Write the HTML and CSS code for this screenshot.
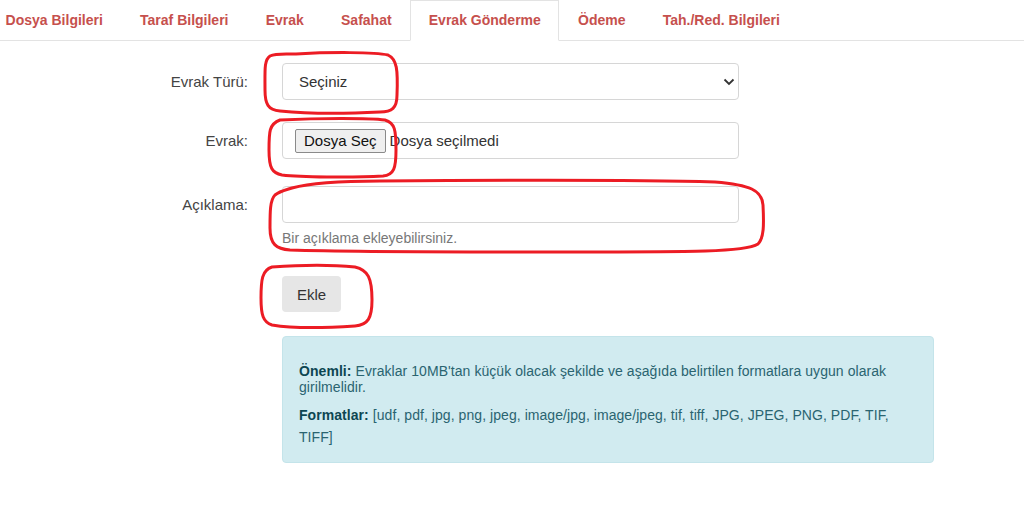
FILE: index.html
```html
<!DOCTYPE html>
<html lang="tr">
<head>
    <meta charset="UTF-8">
    <meta name="viewport" content="width=device-width, initial-scale=1.0">
    <title>Evrak Gönderme</title>
    <link rel="stylesheet" href="styles.css">
</head>
<body>
    <ul class="tabs">
        <li><a href="#">Dosya Bilgileri</a></li>
        <li><a href="#">Taraf Bilgileri</a></li>
        <li><a href="#">Evrak</a></li>
        <li><a href="#">Safahat</a></li>
        <li class="active"><a href="#">Evrak Gönderme</a></li>
        <li><a href="#">Ödeme</a></li>
        <li><a href="#">Tah./Red. Bilgileri</a></li>
    </ul>

    <form class="evrak-form">
        <div class="row">
            <label class="label" for="tur">Evrak Türü:</label>
            <div class="field">
                <div class="select-wrap">
                    <select id="tur" class="control">
                        <option>Seçiniz</option>
                    </select>
                    <svg class="chevron" width="12" height="8" viewBox="0 0 12 8"><path d="M1.5 1.5 L6 6 L10.5 1.5" fill="none" stroke="#333" stroke-width="1.8"/></svg>
                </div>
            </div>
        </div>

        <div class="row row-file">
            <label class="label">Evrak:</label>
            <div class="field">
                <div class="control file-box">
                    <span class="file-btn">Dosya Seç</span>
                    <span class="file-name">Dosya seçilmedi</span>
                </div>
            </div>
        </div>

        <div class="row row-desc">
            <label class="label" for="aciklama">Açıklama:</label>
            <div class="field">
                <input id="aciklama" class="control" type="text">
                <small class="help">Bir açıklama ekleyebilirsiniz.</small>
            </div>
        </div>

        <div class="row row-btn">
            <div class="label"></div>
            <div class="field">
                <button type="button" class="btn">Ekle</button>
            </div>
        </div>

        <div class="row">
            <div class="label"></div>
            <div class="alert">
                <p class="note"><strong>Önemli:</strong> Evraklar 10MB'tan küçük olacak şekilde ve aşağıda belirtilen formatlara uygun olarak girilmelidir.</p>
                <p class="formats"><strong>Formatlar:</strong> [udf, pdf, jpg, png, jpeg, image/jpg, image/jpeg, tif, tiff, JPG, JPEG, PNG, PDF, TIF, TIFF]</p>
            </div>
        </div>
    </form>

    <!-- red marker loops drawn over the screenshot -->
    <svg class="marks" width="1024" height="521" viewBox="0 0 1024 521">
        <path d="M296 54 C330 52 375 52 388 55 C397 59 398 70 397 95 C397 108 392 112 380 112 C340 114 300 113 280 111 C268 110 265 104 265 90 C265 70 264 60 270 56 C276 53 285 54 296 54 Z"/>
        <path d="M280 120 C320 118 370 118 385 120 C395 123 396 130 396 150 C396 168 394 175 383 176 C350 178 300 177 282 175 C272 173 269 168 269 150 C269 132 269 124 280 120 Z"/>
        <path d="M292 188 C310 183 335 181 380 181 C500 180 650 180 715 182 C750 185 762 190 763 205 C764 225 764 238 758 244 C745 252 700 252 550 252 C420 252 320 251 290 250 C276 249 270 244 270 228 C270 212 270 200 275 195 C280 191 286 190 292 188 Z"/>
        <path d="M272 267 C300 265 335 265 355 267 C368 270 372 278 372 300 C372 318 368 325 355 326 C325 328 290 328 272 325 C263 322 261 315 261 298 C261 280 262 270 272 267 Z"/>
    </svg>
</body>
</html>
```

FILE: styles.css
```css
body {
    margin: 0;
    font-family: "Liberation Sans", Arial, sans-serif;
    color: #333;
    background: #fff;
    position: relative;
}

/* tabs */
.tabs {
    display: flex;
    list-style: none;
    margin: 0 0 0 -13px;
    padding: 0;
    border-bottom: 1px solid #e3e3e3;
}

.tabs li {
    border: 1px solid transparent;
    border-bottom: none;
    margin-bottom: -1px;
}

.tabs a {
    display: block;
    padding: 11px 17.6px 11px;
    line-height: 17px;
    font-size: 14px;
    font-weight: bold;
    color: #c6504d;
    text-decoration: none;
}

.tabs .active {
    background: #fff;
    border-color: #e3e3e3;
    border-bottom: 1px solid #fff;
}

/* form */
.evrak-form {
    padding-top: 22px;
}

.row {
    display: flex;
    margin-bottom: 22px;
}

.row-file {
    margin-bottom: 27px;
}

.row-desc {
    margin-bottom: 29px;
}

.row-btn {
    margin-bottom: 24px;
}

.label {
    width: 248px;
    margin-right: 34px;
    text-align: right;
    font-size: 15px;
    line-height: 37px;
    color: #444;
}

.field {
    width: 457px;
}

.control {
    display: block;
    box-sizing: border-box;
    width: 100%;
    height: 37px;
    margin: 0;
    border: 1px solid #d6d6d6;
    border-radius: 4px;
    background: #fff;
    font-family: inherit;
    font-size: 15px;
    color: #333;
}

.select-wrap {
    position: relative;
}

select.control {
    appearance: none;
    -webkit-appearance: none;
    padding: 0 30px 0 16px;
}

.chevron {
    position: absolute;
    right: 4px;
    top: 15px;
    pointer-events: none;
}

.file-box {
    display: flex;
    align-items: center;
    padding-left: 12px;
}

.file-btn {
    box-sizing: border-box;
    height: 24px;
    line-height: 22px;
    padding: 0 8px;
    border: 1px solid #8a8a8a;
    border-radius: 2px;
    background: #efefef;
    color: #111;
}

.file-name {
    margin-left: 4px;
}

.help {
    display: block;
    margin-top: 7px;
    font-size: 14px;
    line-height: 17px;
    color: #777;
}

.btn {
    width: 59px;
    height: 36px;
    border: none;
    border-radius: 4px;
    background: #e6e6e6;
    font-family: inherit;
    font-size: 15px;
    color: #333;
}

.alert {
    box-sizing: border-box;
    width: 652px;
    padding: 26px 16px 14px;
    background: #d1ebf0;
    border: 1px solid #c4e4ea;
    border-radius: 4px;
    color: #2a6470;
    font-size: 14px;
    letter-spacing: 0.06px;
}

.alert p {
    margin: 0;
}

.alert strong {
    color: #0d4652;
}

.note {
    line-height: 16px;
}

.alert .formats {
    margin-top: 9px;
    line-height: 22px;
}

/* red annotation loops */
.marks {
    position: absolute;
    left: 0;
    top: 0;
    pointer-events: none;
}

.marks path {
    fill: none;
    stroke: #ec1c24;
    stroke-width: 3;
}
```
